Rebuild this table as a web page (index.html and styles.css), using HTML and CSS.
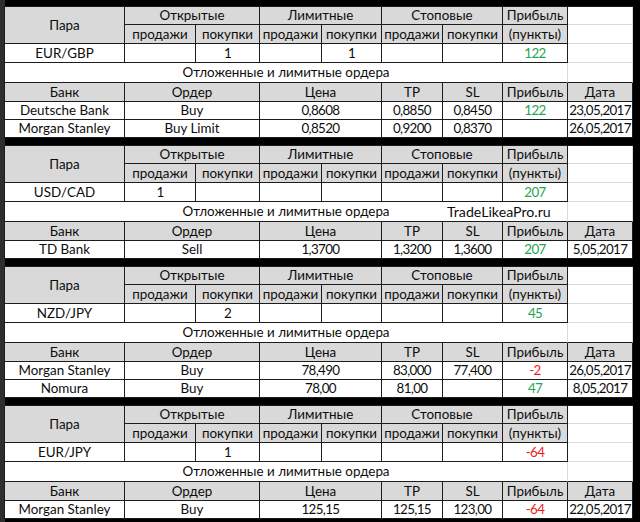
FILE: index.html
```html
<!DOCTYPE html>
<html lang="ru">
<head>
<meta charset="utf-8">
<title>Ордера</title>
<link rel="stylesheet" href="styles.css">
</head>
<body>
<div class="sheet">
  <section class="block rows7">
    <div class="c h pair">Пара</div>
    <div class="c h s2">Открытые</div>
    <div class="c h s2">Лимитные</div>
    <div class="c h s2">Стоповые</div>
    <div class="c h">Прибыль</div>
    <div class="c blank"></div>
    <div class="c h">продажи</div>
    <div class="c h">покупки</div>
    <div class="c h">продажи</div>
    <div class="c h">покупки</div>
    <div class="c h">продажи</div>
    <div class="c h">покупки</div>
    <div class="c h">(пункты)</div>
    <div class="c blank"></div>
    <div class="c">EUR/GBP</div>
    <div class="c"></div>
    <div class="c n">1</div>
    <div class="c"></div>
    <div class="c n">1</div>
    <div class="c"></div>
    <div class="c"></div>
    <div class="c n pos">122</div>
    <div class="c blank"></div>
    <div class="c note">Отложенные и лимитные ордера</div>
    <div class="c blank last"></div>
    <div class="c h">Банк</div>
    <div class="c h s2">Ордер</div>
    <div class="c h s2">Цена</div>
    <div class="c h">TP</div>
    <div class="c h">SL</div>
    <div class="c h">Прибыль</div>
    <div class="c h">Дата</div>
    <div class="c">Deutsche Bank</div>
    <div class="c s2">Buy</div>
    <div class="c n s2">0,8608</div>
    <div class="c n">0,8850</div>
    <div class="c n">0,8450</div>
    <div class="c n pos">122</div>
    <div class="c n">23,05,2017</div>
    <div class="c">Morgan Stanley</div>
    <div class="c s2">Buy Limit</div>
    <div class="c n s2">0,8520</div>
    <div class="c n">0,9200</div>
    <div class="c n">0,8370</div>
    <div class="c"></div>
    <div class="c n">26,05,2017</div>
  </section>

  <section class="block rows6">
    <div class="c h pair">Пара</div>
    <div class="c h s2">Открытые</div>
    <div class="c h s2">Лимитные</div>
    <div class="c h s2">Стоповые</div>
    <div class="c h">Прибыль</div>
    <div class="c blank"></div>
    <div class="c h">продажи</div>
    <div class="c h">покупки</div>
    <div class="c h">продажи</div>
    <div class="c h">покупки</div>
    <div class="c h">продажи</div>
    <div class="c h">покупки</div>
    <div class="c h">(пункты)</div>
    <div class="c blank"></div>
    <div class="c">USD/CAD</div>
    <div class="c n">1</div>
    <div class="c"></div>
    <div class="c"></div>
    <div class="c"></div>
    <div class="c"></div>
    <div class="c"></div>
    <div class="c n pos">207</div>
    <div class="c blank"></div>
    <div class="c note">Отложенные и лимитные ордера<span class="mark">TradeLikeaPro.ru</span></div>
    <div class="c blank last"></div>
    <div class="c h">Банк</div>
    <div class="c h s2">Ордер</div>
    <div class="c h s2">Цена</div>
    <div class="c h">TP</div>
    <div class="c h">SL</div>
    <div class="c h">Прибыль</div>
    <div class="c h">Дата</div>
    <div class="c">TD Bank</div>
    <div class="c s2">Sell</div>
    <div class="c n s2">1,3700</div>
    <div class="c n">1,3200</div>
    <div class="c n">1,3600</div>
    <div class="c n pos">207</div>
    <div class="c n">5,05,2017</div>
  </section>

  <section class="block rows7">
    <div class="c h pair">Пара</div>
    <div class="c h s2">Открытые</div>
    <div class="c h s2">Лимитные</div>
    <div class="c h s2">Стоповые</div>
    <div class="c h">Прибыль</div>
    <div class="c blank"></div>
    <div class="c h">продажи</div>
    <div class="c h">покупки</div>
    <div class="c h">продажи</div>
    <div class="c h">покупки</div>
    <div class="c h">продажи</div>
    <div class="c h">покупки</div>
    <div class="c h">(пункты)</div>
    <div class="c blank"></div>
    <div class="c">NZD/JPY</div>
    <div class="c"></div>
    <div class="c n">2</div>
    <div class="c"></div>
    <div class="c"></div>
    <div class="c"></div>
    <div class="c"></div>
    <div class="c n pos">45</div>
    <div class="c blank"></div>
    <div class="c note">Отложенные и лимитные ордера</div>
    <div class="c blank last"></div>
    <div class="c h">Банк</div>
    <div class="c h s2">Ордер</div>
    <div class="c h s2">Цена</div>
    <div class="c h">TP</div>
    <div class="c h">SL</div>
    <div class="c h">Прибыль</div>
    <div class="c h">Дата</div>
    <div class="c">Morgan Stanley</div>
    <div class="c s2">Buy</div>
    <div class="c n s2">78,490</div>
    <div class="c n">83,000</div>
    <div class="c n">77,400</div>
    <div class="c n neg">-2</div>
    <div class="c n">26,05,2017</div>
    <div class="c">Nomura</div>
    <div class="c s2">Buy</div>
    <div class="c n s2">78,00</div>
    <div class="c n">81,00</div>
    <div class="c"></div>
    <div class="c n pos">47</div>
    <div class="c n">8,05,2017</div>
  </section>

  <section class="block rows6">
    <div class="c h pair">Пара</div>
    <div class="c h s2">Открытые</div>
    <div class="c h s2">Лимитные</div>
    <div class="c h s2">Стоповые</div>
    <div class="c h">Прибыль</div>
    <div class="c blank"></div>
    <div class="c h">продажи</div>
    <div class="c h">покупки</div>
    <div class="c h">продажи</div>
    <div class="c h">покупки</div>
    <div class="c h">продажи</div>
    <div class="c h">покупки</div>
    <div class="c h">(пункты)</div>
    <div class="c blank"></div>
    <div class="c">EUR/JPY</div>
    <div class="c"></div>
    <div class="c n">1</div>
    <div class="c"></div>
    <div class="c"></div>
    <div class="c"></div>
    <div class="c"></div>
    <div class="c n neg">-64</div>
    <div class="c blank"></div>
    <div class="c note">Отложенные и лимитные ордера</div>
    <div class="c blank last"></div>
    <div class="c h">Банк</div>
    <div class="c h s2">Ордер</div>
    <div class="c h s2">Цена</div>
    <div class="c h">TP</div>
    <div class="c h">SL</div>
    <div class="c h">Прибыль</div>
    <div class="c h">Дата</div>
    <div class="c">Morgan Stanley</div>
    <div class="c s2">Buy</div>
    <div class="c n s2">125,15</div>
    <div class="c n">125,15</div>
    <div class="c n">123,00</div>
    <div class="c n neg">-64</div>
    <div class="c n">22,05,2017</div>
  </section>
</div>
</body>
</html>
```

FILE: styles.css
```css
* { box-sizing: border-box; }

html, body {
  margin: 0;
  padding: 0;
  background: #000;
}

body {
  width: 640px;
  height: 522px;
  overflow: hidden;
  font-family: Lato, "Liberation Sans", sans-serif;
  font-size: 13.4px;
  color: #0d0d0d;
}

.sheet {
  display: flex;
  flex-direction: column;
  gap: 7px;
  padding: 6px 7px 0 0;
  border-left: 5px solid #2e2e2e;
  height: 522px;
  background: #000;
}

.block {
  display: grid;
  grid-template-columns: 120px 71px 64px 62px 60px 61px 60px 65px 65px;
  border-top: 1px solid #1c1c1c;
  border-left: 1px solid #1c1c1c;
  width: 629px;
  margin-left: -1px;
  background: #fff;
}

.rows7 { grid-template-rows: 18px 19px 19px 20px 19px 18px 18px; }
.rows6 { grid-template-rows: 18px 19px 19px 20px 19px 18px; }

.c {
  display: flex;
  align-items: center;
  justify-content: center;
  padding-top: 1px;
  background: #fff;
  border-right: 1px solid #1c1c1c;
  border-bottom: 1px solid #1c1c1c;
  white-space: nowrap;
  line-height: 1;
}

.n { letter-spacing: -0.65px; }

.h { background: #d9d9d9; }

.pair { grid-row: span 2; }
.s2 { grid-column: span 2; }

.blank {
  border-right-color: #dadada;
  border-bottom-color: #dadada;
}
.blank.last { border-bottom-color: #1c1c1c; }

.note {
  grid-column: span 8;
  position: relative;
  border-right-color: #dadada;
}

.mark {
  position: absolute;
  left: 442px;
  top: 50%;
  font-size: 14.2px;
  transform: translateY(-50%);
  color: #0d0d0d;
}

.pos { color: #1fa552; }
.neg { color: #f01c1c; }
```
